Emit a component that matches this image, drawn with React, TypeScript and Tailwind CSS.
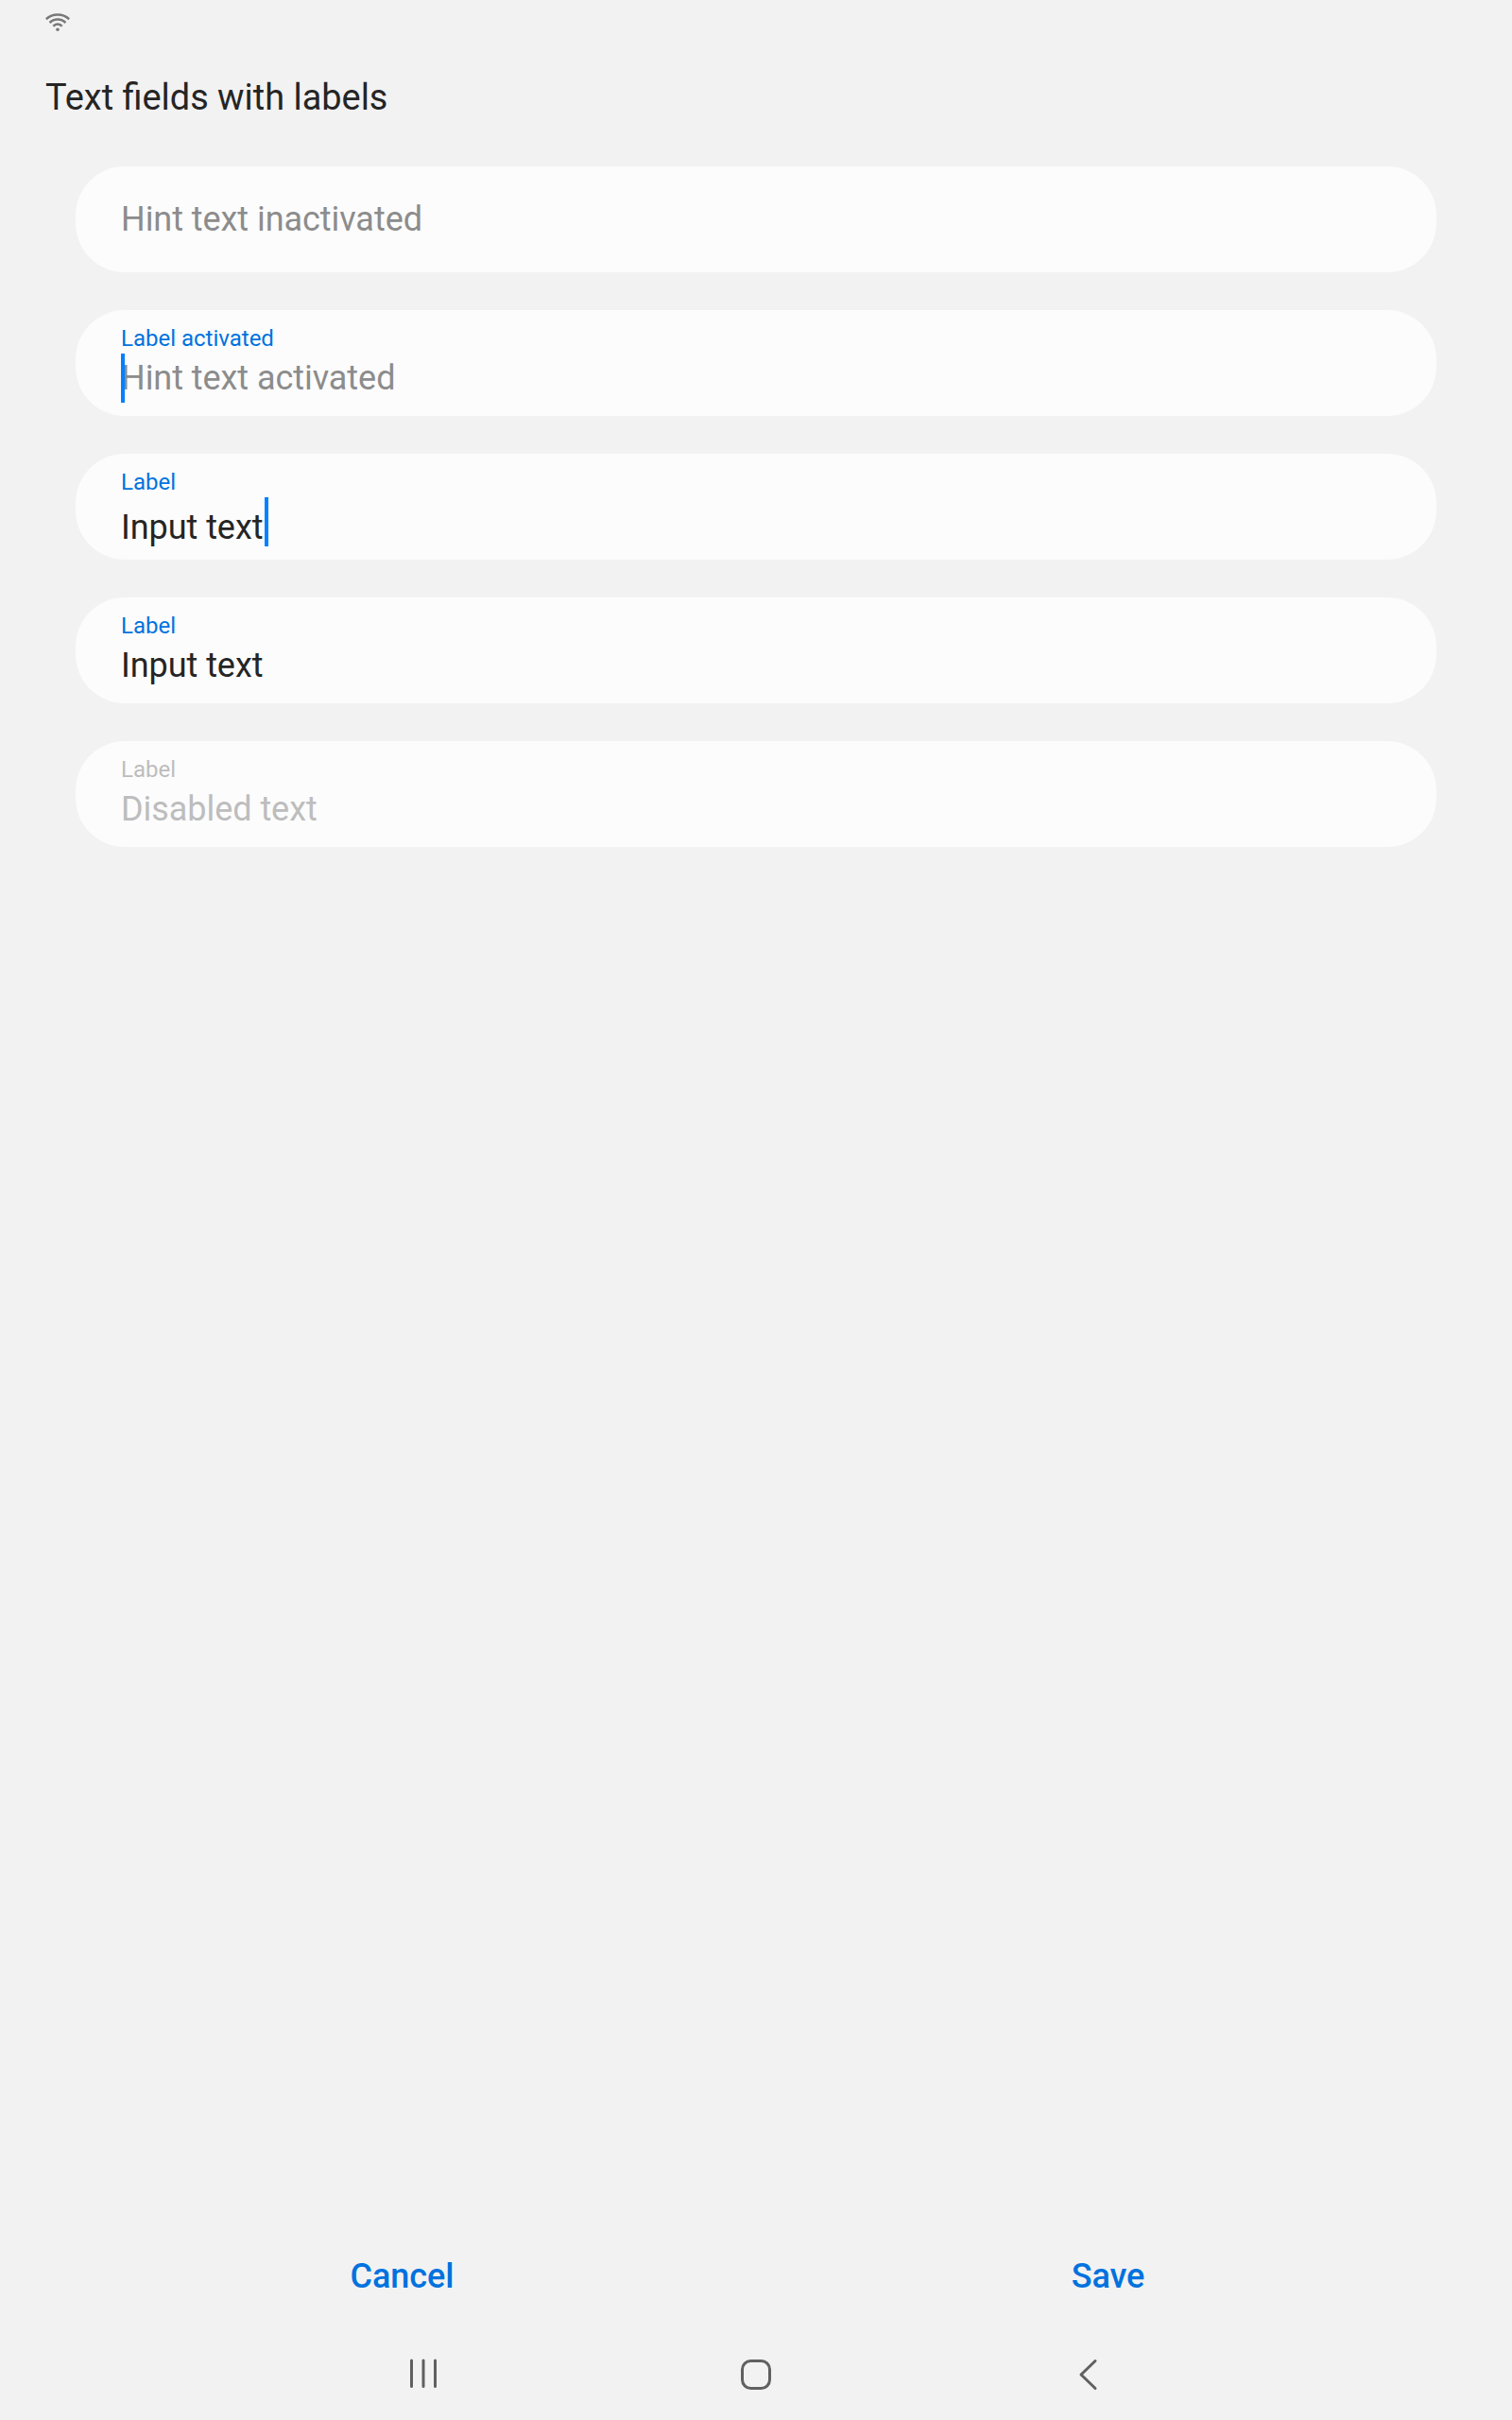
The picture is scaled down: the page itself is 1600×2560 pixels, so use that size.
type Field = {
  label?: string;
  text: string;
  color: string;
  caret?: "start" | "end";
  disabled?: boolean;
};

const fields: Field[] = [
  { text: "Hint text inactivated", color: "text-[#8c8c8c]" },
  { label: "Label activated", text: "Hint text activated", color: "text-[#8c8c8c]", caret: "start" },
  { label: "Label", text: "Input text", color: "text-[#252525]", caret: "end" },
  { label: "Label", text: "Input text", color: "text-[#252525]" },
  { label: "Label", text: "Disabled text", color: "text-[#bdbdbd]", disabled: true },
];

function TextField({ label, text, color, caret, disabled }: Field) {
  const gap = !label ? "mt-[14px]" : caret === "end" ? "mt-2" : "mt-0.5";
  return (
    <div className="flex h-28 flex-col rounded-[52px] bg-[#fcfcfc] px-12 pt-4">
      {label && (
        <span className={`text-[24px] leading-7 ${disabled ? "text-[#bdbdbd]" : "text-[#0072de]"}`}>{label}</span>
      )}
      <span className={`relative self-start text-[36px] leading-[52px] tracking-[-0.05px] ${color} ${gap}`}>
        {text}
        {caret === "start" && <i className="absolute top-0 left-0 h-[52px] w-1 bg-[#0381fe]" />}
        {caret === "end" && <i className="absolute -top-1.5 left-[152px] h-[52px] w-1 bg-[#0381fe]" />}
      </span>
    </div>
  );
}

export default function App() {
  return (
    <div className="flex h-[2560px] w-[1600px] flex-col bg-[#f2f2f2] font-['Roboto',sans-serif]">
      <header className="flex h-12 items-center px-12">
        <svg className="h-12 w-[26px]" viewBox="0 0 26 48" fill="none" stroke="#787878" strokeWidth="2.6">
          <path d="M.8 20.2Q6 15.5 13 15.5T25.2 20.2M4.6 24Q8 20.5 13 20.5T21.4 24M8.4 27.7Q10.2 25.5 13 25.5T17.6 27.7" />
          <circle cx="13" cy="31.3" r="1.8" fill="#787878" stroke="none" />
        </svg>
      </header>
      <h1 className="mt-[31px] px-12 text-[37.9px] leading-12 text-[#252525]">Text fields with labels</h1>
      <main className="mt-[49px] flex flex-1 flex-col gap-10 px-20">
        {fields.map((field, i) => (
          <TextField key={i} {...field} />
        ))}
      </main>
      <footer className="flex h-[70px] justify-center pr-[2px] text-[36px] leading-[52px] font-medium tracking-[-0.05px] text-[#0072de]">
        <button className="h-[52px] w-[747px]">Cancel</button>
        <button className="h-[52px] w-[747px]">Save</button>
      </footer>
      <nav className="flex h-[108px] items-center justify-center gap-[304px] pt-3">
        <svg className="size-12" viewBox="0 0 48 48" fill="none" stroke="#606060" strokeWidth="3" strokeLinecap="round">
          <path d="M11.5 9V36.5M24 9V36.5M36.5 9V36.5" />
        </svg>
        <svg className="size-12" viewBox="0 0 48 48" fill="none" stroke="#606060" strokeWidth="3">
          <rect x="9.5" y="9.5" width="29" height="29" rx="9" />
        </svg>
        <svg className="size-12" viewBox="0 0 48 48" fill="none" stroke="#606060" strokeWidth="3" strokeLinecap="round" strokeLinejoin="round">
          <path d="M31 9.5L16 24L31 38.5" />
        </svg>
      </nav>
    </div>
  );
}
